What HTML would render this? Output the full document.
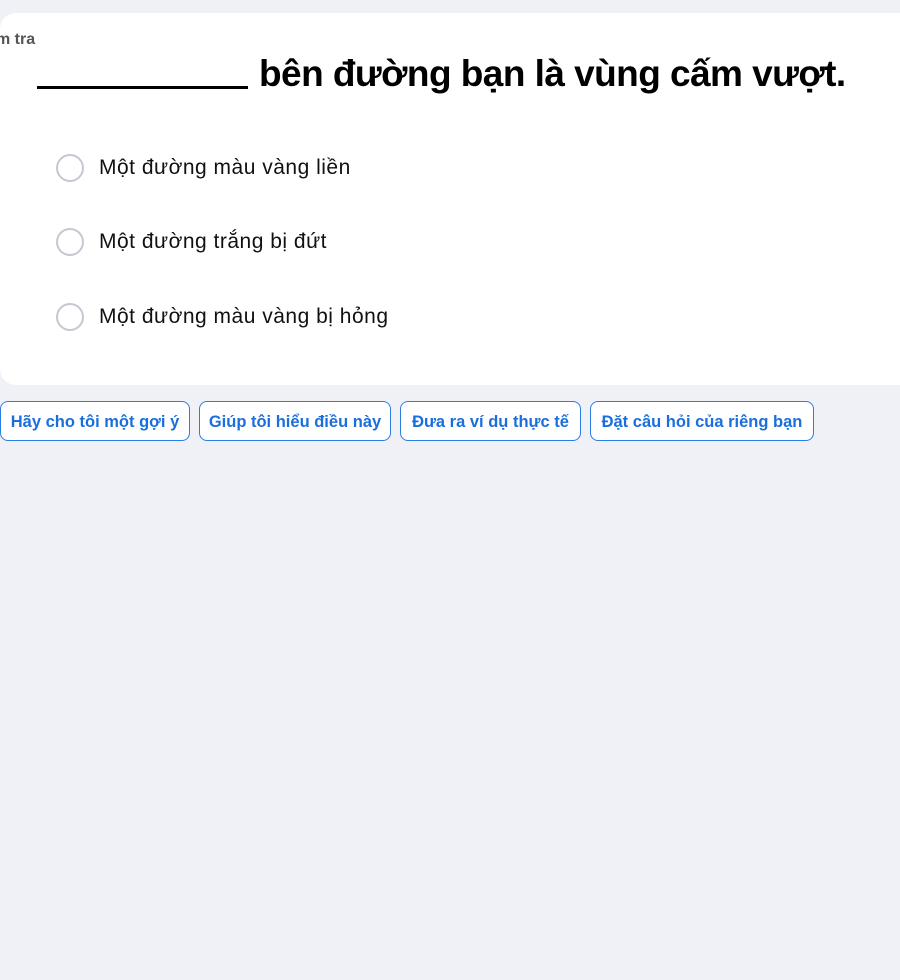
<!DOCTYPE html>
<html><head><meta charset="utf-8"><style>
body{margin:0;width:900px;height:980px;background:#f0f1f6;font-family:"Liberation Sans",sans-serif;position:relative;overflow:hidden}
.card{position:absolute;left:0;top:13px;width:920px;height:372px;background:#fff;border-radius:16px}
.lbl{position:absolute;left:-4px;top:31px;font-size:16px;font-weight:bold;color:#555}
.q{position:absolute;left:37px;top:53px;font-size:37px;font-weight:bold;color:#000;white-space:nowrap;letter-spacing:-0.55px}
.u{position:absolute;left:37px;top:86px;width:211px;height:3px;background:#000}
.opt{position:absolute;left:56px;height:28px;display:flex;align-items:center;font-size:21px;color:#111;white-space:nowrap;letter-spacing:0.5px}
.opt i{width:24px;height:24px;border:2px solid #c7c7d2;border-radius:50%;margin-right:15px;display:inline-block}
.b{position:absolute;top:401px;height:38px;border:1px solid #2a7de1;border-radius:8px;background:#fff;color:#1a6fdc;font-weight:bold;font-size:16.5px;line-height:40px;text-align:center;white-space:nowrap}
</style></head><body>
<div class="card"></div>
<div class="lbl">m tra</div>
<div class="u"></div>
<div class="q" style="left:259px">bên đường bạn là vùng cấm vượt.</div>
<div class="opt" style="top:154px"><i></i>Một đường màu vàng liền</div>
<div class="opt" style="top:228px"><i></i>Một đường trắng bị đứt</div>
<div class="opt" style="top:303px"><i></i>Một đường màu vàng bị hỏng</div>
<div class="b" style="left:0;width:188px">Hãy cho tôi một gợi ý</div>
<div class="b" style="left:199px;width:190px">Giúp tôi hiểu điều này</div>
<div class="b" style="left:400px;width:179px">Đưa ra ví dụ thực tế</div>
<div class="b" style="left:590px;width:222px">Đặt câu hỏi của riêng bạn</div>
</body></html>
